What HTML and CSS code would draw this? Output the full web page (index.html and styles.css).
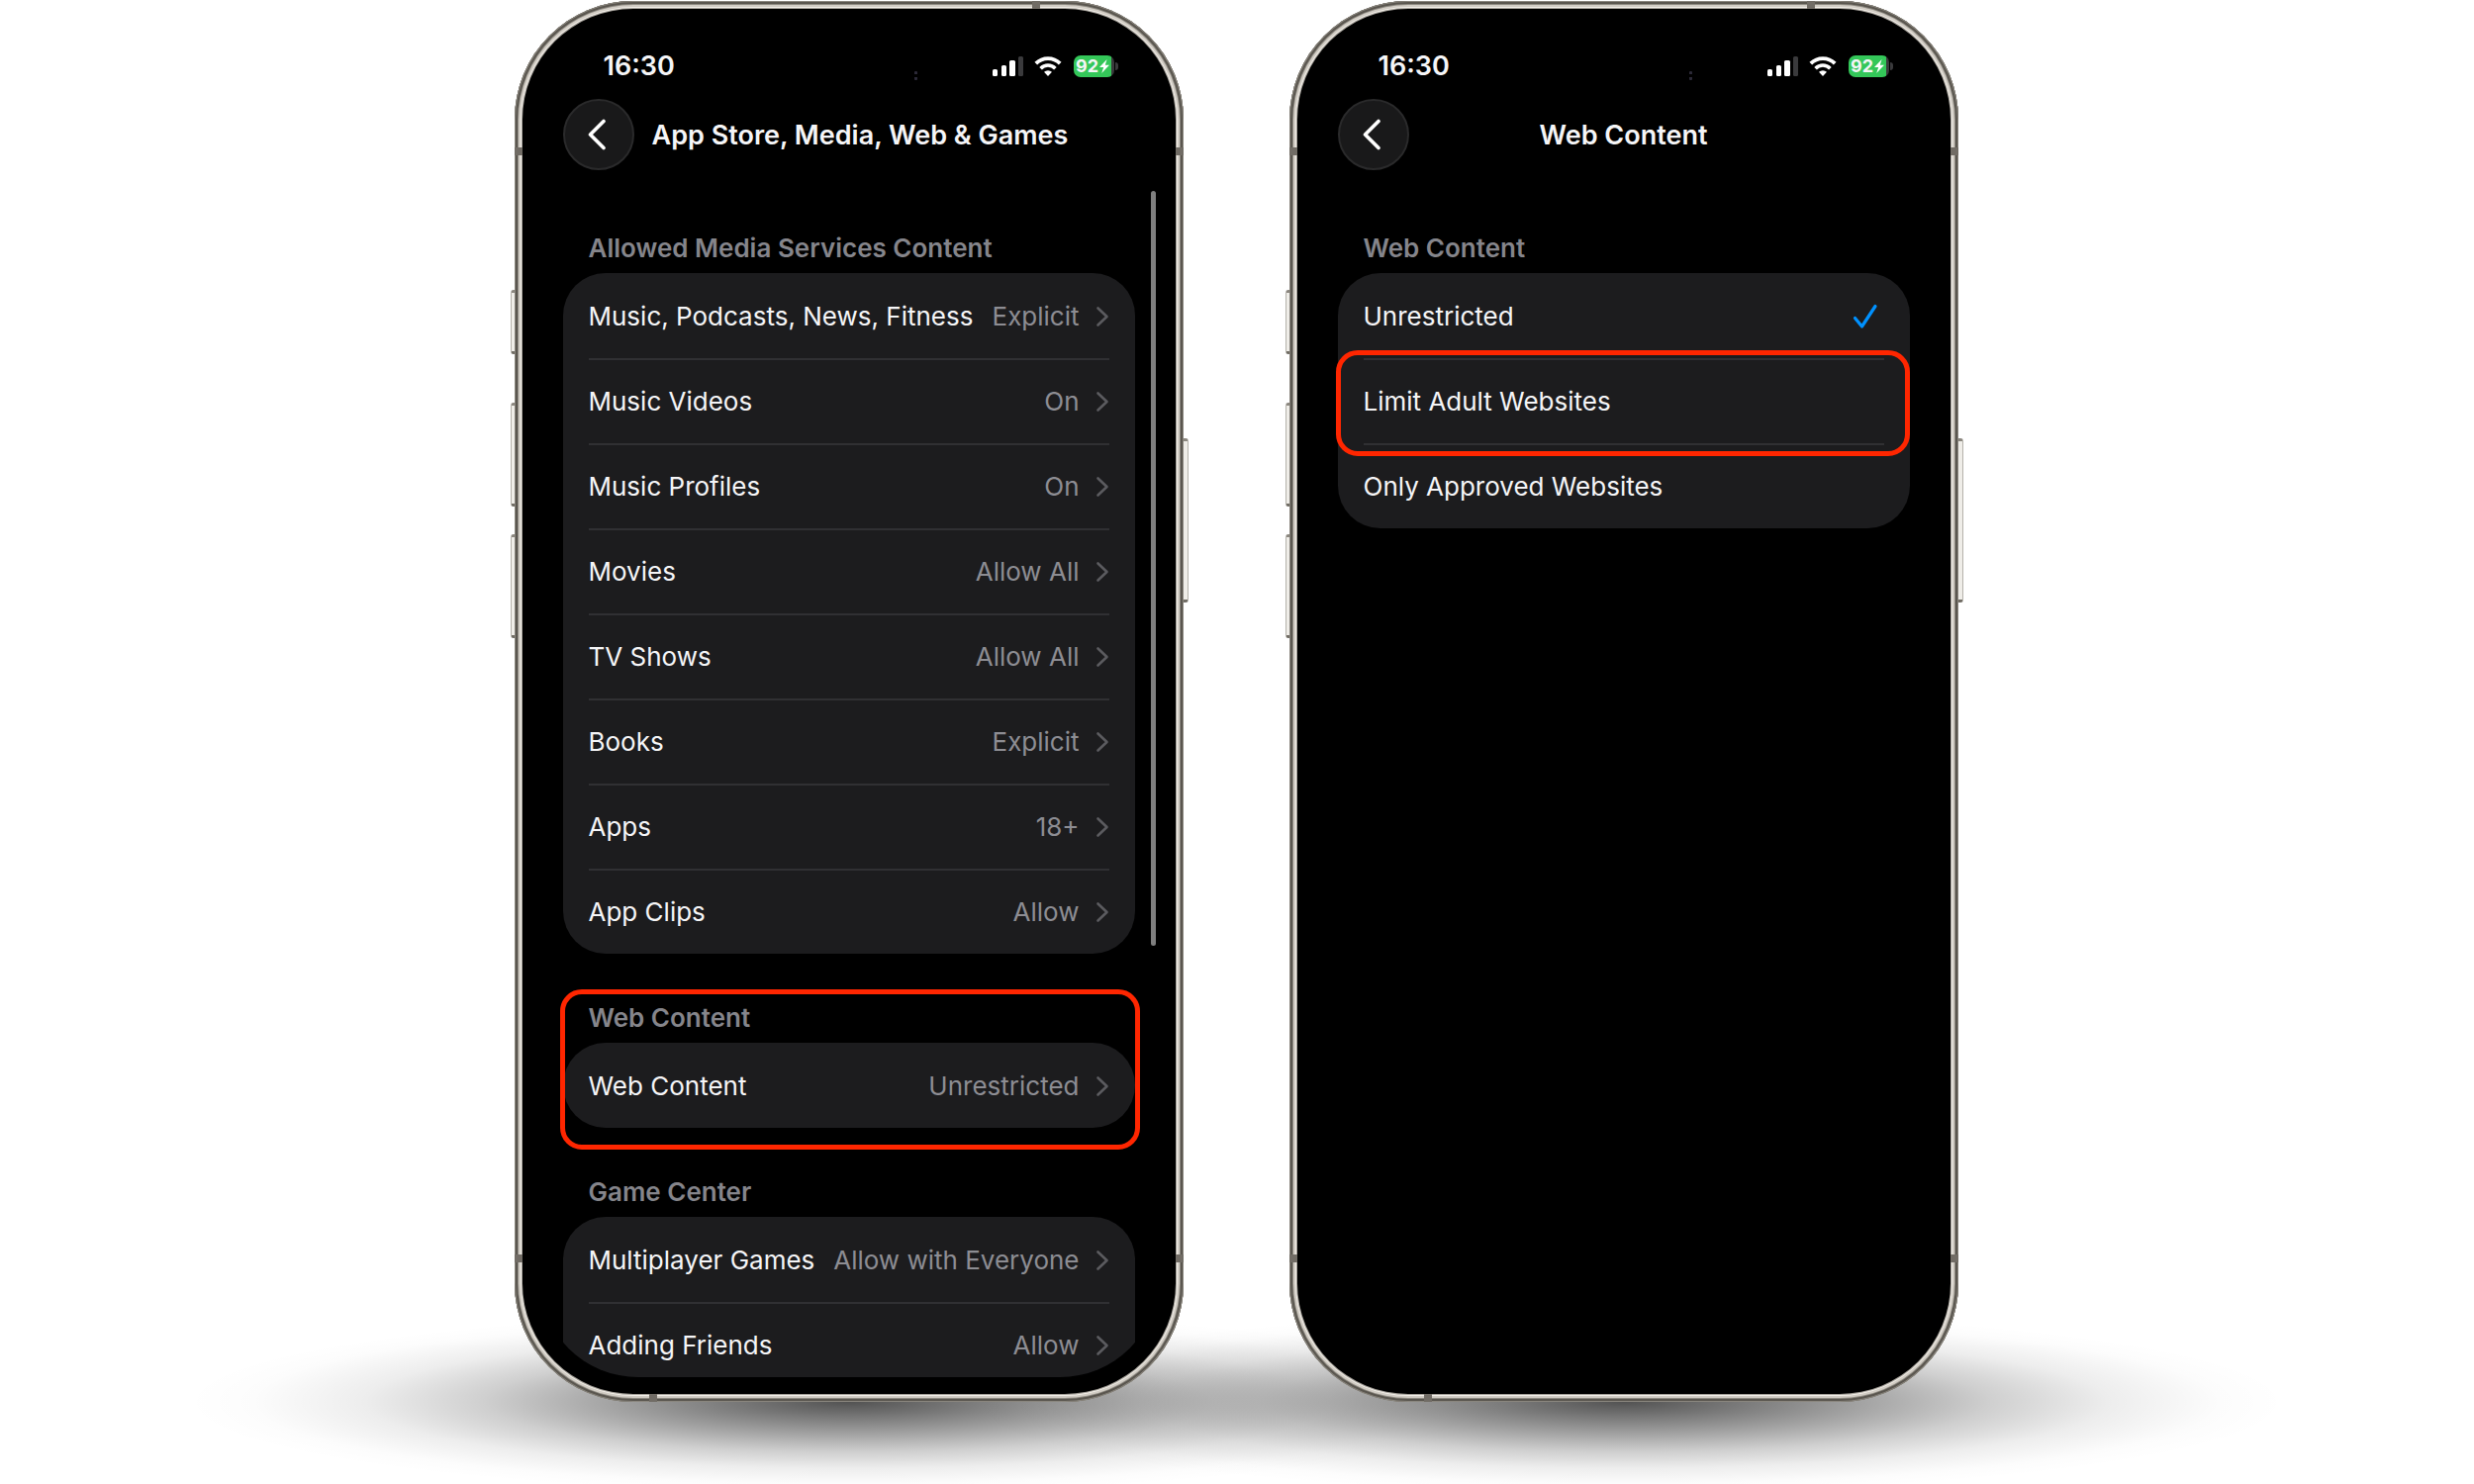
FILE: index.html
```html
<!DOCTYPE html>
<html lang="en">
<head>
    <meta charset="UTF-8">
    <meta name="viewport" content="width=device-width, initial-scale=1.0">
    <title>Web Content Restrictions</title>
    <link rel="stylesheet" href="styles.css">
</head>
<body>

    <!-- shared icons -->
    <svg class="icon-defs" aria-hidden="true">
        <symbol id="signal" viewBox="0 0 32 20">
            <rect x="0" y="13" width="5" height="7" rx="1.5" fill="#fff"/>
            <rect x="9" y="9" width="5" height="11" rx="1.5" fill="#fff"/>
            <rect x="17" y="4" width="6" height="16" rx="1.5" fill="#fff"/>
            <rect x="26" y="0" width="5" height="20" rx="1.5" fill="#3a3a3c"/>
        </symbol>
        <symbol id="wifi" viewBox="0 0 28 20">
            <path d="M1.800 7.200a17.200 17.200 0 0 1 24.400 0" fill="none" stroke="#fff" stroke-width="3.800"/>
            <path d="M6.600 12.200a10.300 10.300 0 0 1 14.800 0" fill="none" stroke="#fff" stroke-width="3.600"/>
            <path d="M14 20l-4-4.200a5.800 5.800 0 0 1 8 0z" fill="#fff"/>
        </symbol>
        <symbol id="bolt" viewBox="0 0 10 14">
            <path d="M7.600 0L0 8h4.200L2.200 14 10 5.800H5.800z" fill="#fff"/>
        </symbol>
        <symbol id="back" viewBox="0 0 20 32">
            <path d="M17 2.500L3.500 16 17 29.500" fill="none" stroke="#fff" stroke-width="3.600" stroke-linecap="round" stroke-linejoin="round"/>
        </symbol>
        <symbol id="chevron" viewBox="0 0 14 22">
            <path d="M2.500 2.500L11.500 11 2.500 19.500" fill="none" stroke="#5b5b5f" stroke-width="2.600" stroke-linecap="round" stroke-linejoin="round"/>
        </symbol>
        <symbol id="check" viewBox="0 0 26 26">
            <path d="M2.500 14.500L9.500 23 23 2.500" fill="none" stroke="#0091ff" stroke-width="3.200" stroke-linecap="round" stroke-linejoin="round"/>
        </symbol>
    </svg>

    <main class="phones">

        <!-- App Store, Media, Web & Games -->
        <div class="phone">
            <span class="side-button action"></span>
            <span class="side-button volume-up"></span>
            <span class="side-button volume-down"></span>
            <span class="side-button power"></span>
            <div class="frame">
                <span class="band band-top"></span>
                <span class="band band-bottom"></span>
                <span class="band band-left upper"></span>
                <span class="band band-left lower"></span>
                <span class="band band-right upper"></span>
                <span class="band band-right lower"></span>
                <div class="screen">
                    <div class="status-bar">
                        <span class="time">16:30</span>
                        <span class="sensor"></span>
                        <div class="status-icons">
                            <svg class="signal"><use href="#signal"/></svg>
                            <svg class="wifi"><use href="#wifi"/></svg>
                            <span class="battery">92<svg class="bolt"><use href="#bolt"/></svg></span>
                        </div>
                    </div>
                    <header class="nav-bar">
                        <button type="button" class="back-button" aria-label="Back"><svg><use href="#back"/></svg></button>
                        <h1 class="long-title">App Store, Media, Web &amp; Games</h1>
                    </header>

                    <section class="group">
                        <h2>Allowed Media Services Content</h2>
                        <div class="card">
                            <a class="row" href="#"><span>Music, Podcasts, News, Fitness</span><span class="value">Explicit</span><svg class="chevron"><use href="#chevron"/></svg></a>
                            <a class="row" href="#"><span>Music Videos</span><span class="value">On</span><svg class="chevron"><use href="#chevron"/></svg></a>
                            <a class="row" href="#"><span>Music Profiles</span><span class="value">On</span><svg class="chevron"><use href="#chevron"/></svg></a>
                            <a class="row" href="#"><span>Movies</span><span class="value">Allow All</span><svg class="chevron"><use href="#chevron"/></svg></a>
                            <a class="row" href="#"><span>TV Shows</span><span class="value">Allow All</span><svg class="chevron"><use href="#chevron"/></svg></a>
                            <a class="row" href="#"><span>Books</span><span class="value">Explicit</span><svg class="chevron"><use href="#chevron"/></svg></a>
                            <a class="row" href="#"><span>Apps</span><span class="value">18+</span><svg class="chevron"><use href="#chevron"/></svg></a>
                            <a class="row" href="#"><span>App Clips</span><span class="value">Allow</span><svg class="chevron"><use href="#chevron"/></svg></a>
                        </div>
                    </section>

                    <section class="group marked">
                        <h2>Web Content</h2>
                        <div class="card">
                            <a class="row" href="#"><span>Web Content</span><span class="value">Unrestricted</span><svg class="chevron"><use href="#chevron"/></svg></a>
                        </div>
                    </section>

                    <section class="group">
                        <h2>Game Center</h2>
                        <div class="card cut-off">
                            <a class="row" href="#"><span>Multiplayer Games</span><span class="value">Allow with Everyone</span><svg class="chevron"><use href="#chevron"/></svg></a>
                            <a class="row" href="#"><span>Adding Friends</span><span class="value">Allow</span><svg class="chevron"><use href="#chevron"/></svg></a>
                        </div>
                    </section>
                    <span class="scroll-bar"></span>
                </div>
            </div>
        </div>

        <!-- Web Content -->
        <div class="phone">
            <span class="side-button action"></span>
            <span class="side-button volume-up"></span>
            <span class="side-button volume-down"></span>
            <span class="side-button power"></span>
            <div class="frame">
                <span class="band band-top"></span>
                <span class="band band-bottom"></span>
                <span class="band band-left upper"></span>
                <span class="band band-left lower"></span>
                <span class="band band-right upper"></span>
                <span class="band band-right lower"></span>
                <div class="screen">
                    <div class="status-bar">
                        <span class="time">16:30</span>
                        <span class="sensor"></span>
                        <div class="status-icons">
                            <svg class="signal"><use href="#signal"/></svg>
                            <svg class="wifi"><use href="#wifi"/></svg>
                            <span class="battery">92<svg class="bolt"><use href="#bolt"/></svg></span>
                        </div>
                    </div>
                    <header class="nav-bar">
                        <button type="button" class="back-button" aria-label="Back"><svg><use href="#back"/></svg></button>
                        <h1>Web Content</h1>
                    </header>

                    <section class="group">
                        <h2>Web Content</h2>
                        <div class="card">
                            <label class="row" for="unrestricted">
                                <span>Unrestricted</span>
                                <input type="radio" id="unrestricted" name="web-content" checked>
                                <svg class="check"><use href="#check"/></svg>
                            </label>
                            <label class="row marked" for="limit-adult">
                                <span>Limit Adult Websites</span>
                                <input type="radio" id="limit-adult" name="web-content">
                                <svg class="check"><use href="#check"/></svg>
                            </label>
                            <label class="row" for="only-approved">
                                <span>Only Approved Websites</span>
                                <input type="radio" id="only-approved" name="web-content">
                                <svg class="check"><use href="#check"/></svg>
                            </label>
                        </div>
                    </section>
                </div>
            </div>
        </div>

    </main>

</body>
</html>
```
FILE: styles.css
```css
* {
    box-sizing: border-box;
}
body {
    margin: 0;
    background-color: #fff;
    font-family: Inter, "Liberation Sans", sans-serif;
    font-size: 26px;
    line-height: 34px;
    color: #f5f5f7;
}
.icon-defs {
    position: absolute;
    width: 0;
    height: 0;
}
.phones {
    display: flex;
    justify-content: center;
    gap: 107px;
    min-height: 100vh;
    padding: 1px 2px 82px 0;
    overflow: hidden;
}

/* phone body */
.phone {
    position: relative;
    flex: 0 1 676px;
    min-width: 0;
    min-height: 0;
    aspect-ratio: 676 / 1416;
    align-self: flex-start;
}
/* shadow on the floor */
.phone::before {
    content: "";
    position: absolute;
    z-index: -1;
    left: -332px;
    right: -332px;
    bottom: -92px;
    height: 184px;
    background: radial-gradient(closest-side, rgba(0,0,0,0.68), rgba(0,0,0,0.5) 20%, rgba(0,0,0,0.34) 38%, rgba(0,0,0,0.19) 55%, rgba(0,0,0,0.07) 73%, rgba(0,0,0,0.01) 90%, transparent);
}
.frame {
    position: relative;
    height: 100%;
    padding: 25px;
    border-radius: 120px;
    overflow: hidden;
    background-color: #000;
    box-shadow: inset 0 0 0 1px #8a867e, inset 0 0 0 3px #5a564f, inset 0 0 0 4px #8f8b83, inset 0 0 0 6px #d2cdc5, inset 0 0 0 7px #f2eee8, inset 0 0 0 8px #a39f98;
}
.band {
    position: absolute;
    width: 8px;
    height: 8px;
    background-color: #716c65;
}
.band-top {
    top: 0;
    right: 145px;
}
.band-bottom {
    bottom: 0;
    left: 136px;
}
.band-left {
    left: 0;
}
.band-right {
    right: 0;
}
.upper {
    top: 148px;
}
.lower {
    bottom: 141px;
}
.side-button {
    position: absolute;
    left: -4px;
    width: 5px;
    border: solid;
    border-width: 3px 1px;
    border-color: #8b877f #b5b2ab #716d65;
    border-radius: 3px 0 0 3px;
    background-color: #efede8;
}
.action {
    top: 292px;
    height: 65px;
}
.volume-up {
    top: 406px;
    height: 105px;
}
.volume-down {
    top: 539px;
    height: 105px;
}
.power {
    left: auto;
    right: -5px;
    width: 6px;
    top: 442px;
    height: 166px;
    border-radius: 0 3px 3px 0;
}

/* screen */
.screen {
    position: relative;
    height: 100%;
    padding: 0 24px;
    border-radius: 100px;
    overflow: hidden;
}
.status-bar {
    position: relative;
    display: flex;
    justify-content: space-between;
    align-items: center;
    padding: 24px 21px 0 41px;
}
.time {
    font-size: 27px;
    font-weight: 600;
}
.sensor {
    position: absolute;
    left: 355px;
    bottom: 3px;
    width: 3px;
    height: 9px;
    border: solid #2b2937;
    border-width: 3px 0;
    border-radius: 1px;
}
.status-icons {
    display: flex;
    align-items: center;
}
.signal {
    width: 32px;
    height: 20px;
    margin-right: 10px;
}
.wifi {
    width: 28px;
    height: 20px;
    margin-right: 12px;
}
.battery {
    position: relative;
    display: flex;
    align-items: center;
    justify-content: center;
    gap: 1px;
    width: 41px;
    height: 22px;
    padding-right: 2px;
    border-radius: 7px;
    background: linear-gradient(to right, #34c759 38px, #3a3a3c 38px);
    font-size: 18px;
    font-weight: 700;
}
.battery::after {
    content: "";
    position: absolute;
    right: -4px;
    width: 3px;
    height: 8px;
    border-radius: 0 3px 3px 0;
    background-color: #3a3a3c;
}
.bolt {
    width: 10px;
    height: 14px;
}
.nav-bar {
    display: grid;
    grid-template-columns: 72px 1fr 72px;
    align-items: center;
    padding: 16px 0 62px;
}
.back-button {
    display: flex;
    align-items: center;
    justify-content: center;
    width: 72px;
    height: 72px;
    padding: 0 4px 0 0;
    border: 2px solid #2a2a2b;
    border-radius: 50%;
    background-color: #19191a;
    cursor: pointer;
}
.back-button svg {
    width: 20px;
    height: 32px;
}
h1 {
    margin: 0;
    padding-top: 2px;
    font-size: 27px;
    font-weight: 600;
    text-align: center;
    white-space: nowrap;
}
.long-title {
    padding-left: 18px;
    text-align: left;
}

/* settings groups */
.group {
    position: relative;
}
.group + .group {
    margin-top: 48px;
}
.group h2 {
    margin: 0;
    padding: 0 26px 8px;
    font-size: 26px;
    font-weight: 600;
    color: #85858b;
}
.card {
    padding: 0 26px;
    border-radius: 43px;
    background-color: #1c1c1e;
}
/* runs on below the screen edge */
.cut-off {
    padding-bottom: 86px;
}
.row {
    position: relative;
    display: flex;
    align-items: center;
    height: 86px;
    padding-top: 2px;
    color: inherit;
    text-decoration: none;
    white-space: nowrap;
    cursor: pointer;
}
.row + .row {
    padding-top: 0;
    border-top: 2px solid #303033;
}
.value {
    margin-left: auto;
    color: #8d8d93;
}
.chevron {
    width: 14px;
    height: 22px;
    margin-left: 16px;
}
.row input {
    appearance: none;
    width: 0;
    height: 0;
    margin: 0 0 0 auto;
}
.check {
    display: none;
    width: 26px;
    height: 26px;
    margin-right: 6px;
}
input:checked + .check {
    display: block;
}

/* red outline around the setting to tap */
.marked::after {
    content: "";
    position: absolute;
    border: 5px solid #ff2600;
    border-radius: 22px;
    pointer-events: none;
}
.group.marked::after {
    inset: -12px -5px -22px -3px;
}
.row.marked::after {
    inset: -10px -26px -13px -28px;
}

.scroll-bar {
    position: absolute;
    top: 167px;
    right: 3px;
    width: 5px;
    height: 763px;
    border-radius: 3px;
    background-color: #7f7f7f;
}
```
